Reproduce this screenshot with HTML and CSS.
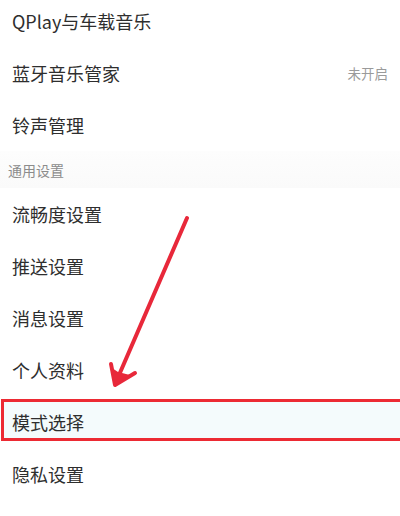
FILE: index.html
```html
<!DOCTYPE html>
<html lang="zh-CN">
<head>
<meta charset="utf-8">
<title>设置</title>
<link rel="stylesheet" href="styles.css">
</head>
<body>
<div class="page">
  <ul class="list">
    <li class="row"><span class="label">QPlay与车载音乐</span></li>
    <li class="row"><span class="label">蓝牙音乐管家</span><span class="value">未开启</span></li>
    <li class="row"><span class="label">铃声管理</span></li>
    <li class="section">通用设置</li>
    <li class="row"><span class="label">流畅度设置</span></li>
    <li class="row"><span class="label">推送设置</span></li>
    <li class="row"><span class="label">消息设置</span></li>
    <li class="row"><span class="label">个人资料</span></li>
    <li class="row row-marked"><span class="mark"></span><span class="label">模式选择</span></li>
    <li class="row"><span class="label">隐私设置</span></li>
  </ul>
  <svg class="arrow" width="400" height="516" viewBox="0 0 400 516" aria-hidden="true">
    <line x1="187" y1="218" x2="116" y2="382" stroke="#e8283a" stroke-width="4" stroke-linecap="round"/>
    <polyline points="111,364 115,385 135,373" fill="none" stroke="#e8283a" stroke-width="4" stroke-linecap="round" stroke-linejoin="round"/>
    <polygon points="112,368 115,385 130,375 118,372" fill="#e8283a"/>
  </svg>
</div>
</body>
</html>
```

FILE: styles.css
```css
html, body {
  margin: 0;
  padding: 0;
  background: #ffffff;
}

body {
  font-family: "Noto Sans CJK SC", "Noto Sans", sans-serif;
  color: #2b2b2b;
  overflow: hidden;
}

.page {
  position: relative;
  width: 400px;
  height: 516px;
  overflow: hidden;
}

.list {
  list-style: none;
  margin: -5px 0 0 0;
  padding: 0;
}

.row {
  position: relative;
  height: 52px;
  display: flex;
  align-items: center;
  justify-content: space-between;
  padding: 0 12px;
}

.label {
  position: relative;
  font-size: 18px;
  color: #2e2e2e;
  letter-spacing: 0;
}

.value {
  font-size: 13.5px;
  color: #9a9a9a;
}

.section {
  height: 37px;
  display: flex;
  align-items: center;
  padding: 0 8px;
  font-size: 14px;
  color: #8c8c8c;
  background: linear-gradient(#fdfdfd, #fafafa);
}

.row-marked .mark {
  position: absolute;
  left: 1px;
  right: -10px;
  top: 3px;
  height: 36px;
  border: 3.5px solid #ec2a33;
  background: #f4fbfc;
}

.arrow {
  position: absolute;
  left: 0;
  top: 0;
  pointer-events: none;
}
```
